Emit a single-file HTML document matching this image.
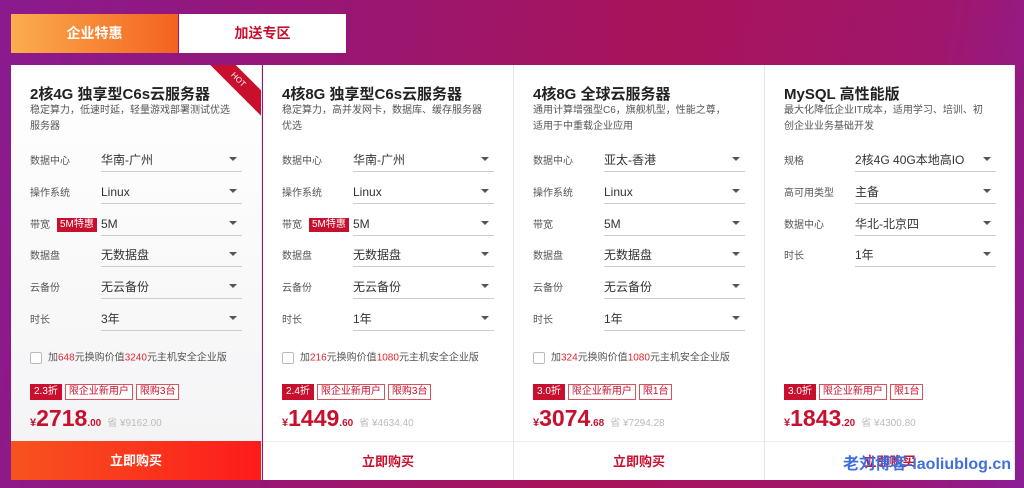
<!DOCTYPE html>
<html><head><meta charset="utf-8"><style>
*{margin:0;padding:0;box-sizing:border-box}
body{width:1024px;height:488px;overflow:hidden;font-family:"Liberation Sans","Noto Sans CJK SC",sans-serif;background:linear-gradient(100deg,#8a1a8f 0%,#9a1670 35%,#a8145a 60%,#a0166c 85%,#8b1e95 100%);position:relative}
.tab{position:absolute;top:14px;height:39px;width:167px;text-align:center;line-height:39px;font-size:14px;font-weight:bold}
.t1{left:11px;background:linear-gradient(90deg,#fbad4e,#f4621f);color:#fff}
.t2{left:179px;background:#fff;color:#c8102e}
.card{position:absolute;top:65px;height:415px;width:251px;background:#fff;border-right:1px solid #e6e6e6;overflow:hidden}
.card.f{background:linear-gradient(180deg,#fff 0%,#f3f3f5 100%)}
.ttl{position:absolute;left:19px;top:21px;font-size:15px;line-height:18px;font-weight:bold;color:#222}
.desc{position:absolute;left:19px;top:38px;width:200px;font-size:10px;line-height:16px;color:#555}
.row{position:absolute;left:19px;width:212px;height:22px;font-size:10px;color:#555}
.row .l{position:absolute;left:0;top:5px;line-height:14px}
.row .s{position:absolute;left:71px;top:0;width:141px;height:22px;border-bottom:1px solid #ccc;font-size:12px;color:#333;line-height:14px;padding-top:3px}
.row .s:after{content:"";position:absolute;right:5px;top:7px;border:4px solid transparent;border-top:4px solid #555}
.badge{position:absolute;left:27px;top:4px;background:#c8102e;color:#fff;font-size:10px;padding:0 3px;line-height:14px}
.chk{position:absolute;left:19px;top:287px;font-size:10px;color:#555;line-height:12px}
.chk i{display:inline-block;width:12px;height:12px;border:1px solid #bbb;border-radius:2px;vertical-align:middle;margin-right:6px;background:#fff}
.r{color:#e0252f}
.tags{position:absolute;left:19px;top:319px;font-size:10px}
.tags span{display:inline-block;line-height:14px;padding:0 3px;border:1px solid #d8525b;color:#c8102e;margin-right:3px;background:#fff}
.tags span.d{background:#c8102e;color:#fff;border-color:#c8102e}
.price{position:absolute;left:19px;top:340px;color:#c8102e;font-weight:bold;white-space:nowrap}
.price .y{font-size:11px}.price .b{font-size:23px}.price .c{font-size:10px}
.price .o{font-size:10px;color:#bbb;font-weight:normal;margin-left:6px}
.btn{position:absolute;left:0;bottom:0;width:100%;height:39px;line-height:39px;text-align:center;font-size:13px;font-weight:bold;color:#c8102e;background:#fff;border-top:1px solid #eee}
.f .btn{background:linear-gradient(90deg,#f7531e,#fd1b1b);color:#fff;border:none}
.hot{position:absolute;right:-22px;top:6px;width:90px;height:18px;background:#c8102e;transform:rotate(45deg);color:#fff;font-size:8px;text-align:center;line-height:18px}
.wm{position:absolute;left:843px;top:450px;font-size:16px;font-weight:bold;color:#3f6fdd}
</style></head><body>
<div class="tab t1">企业特惠</div><div class="tab t2">加送专区</div>

<div class="card f" style="left:11px">
<div class="hot">HOT</div>
<div class="ttl">2核4G 独享型C6s云服务器</div>
<div class="desc">稳定算力，低速时延，轻量游戏部署测试优选服务器</div>
<div class="row" style="top:85px"><span class="l">数据中心</span><div class="s">华南-广州</div></div>
<div class="row" style="top:117px"><span class="l">操作系统</span><div class="s">Linux</div></div>
<div class="row" style="top:149px"><span class="l">带宽</span><span class="badge">5M特惠</span><div class="s">5M</div></div>
<div class="row" style="top:180px"><span class="l">数据盘</span><div class="s">无数据盘</div></div>
<div class="row" style="top:212px"><span class="l">云备份</span><div class="s">无云备份</div></div>
<div class="row" style="top:244px"><span class="l">时长</span><div class="s">3年</div></div>
<div class="chk"><i></i>加<span class="r">648</span>元换购价值<span class="r">3240</span>元主机安全企业版</div>
<div class="tags"><span class="d">2.3折</span><span>限企业新用户</span><span>限购3台</span></div>
<div class="price"><span class="y">¥</span><span class="b">2718</span><span class="c">.00</span><span class="o">省 ¥9162.00</span></div>
<div class="btn">立即购买</div></div>

<div class="card" style="left:263px">
<div class="ttl">4核8G 独享型C6s云服务器</div>
<div class="desc">稳定算力，高并发网卡，数据库、缓存服务器优选</div>
<div class="row" style="top:85px"><span class="l">数据中心</span><div class="s">华南-广州</div></div>
<div class="row" style="top:117px"><span class="l">操作系统</span><div class="s">Linux</div></div>
<div class="row" style="top:149px"><span class="l">带宽</span><span class="badge">5M特惠</span><div class="s">5M</div></div>
<div class="row" style="top:180px"><span class="l">数据盘</span><div class="s">无数据盘</div></div>
<div class="row" style="top:212px"><span class="l">云备份</span><div class="s">无云备份</div></div>
<div class="row" style="top:244px"><span class="l">时长</span><div class="s">1年</div></div>
<div class="chk"><i></i>加<span class="r">216</span>元换购价值<span class="r">1080</span>元主机安全企业版</div>
<div class="tags"><span class="d">2.4折</span><span>限企业新用户</span><span>限购3台</span></div>
<div class="price"><span class="y">¥</span><span class="b">1449</span><span class="c">.60</span><span class="o">省 ¥4634.40</span></div>
<div class="btn">立即购买</div></div>

<div class="card" style="left:514px">
<div class="ttl">4核8G 全球云服务器</div>
<div class="desc">通用计算增强型C6，旗舰机型，性能之尊，适用于中重载企业应用</div>
<div class="row" style="top:85px"><span class="l">数据中心</span><div class="s">亚太-香港</div></div>
<div class="row" style="top:117px"><span class="l">操作系统</span><div class="s">Linux</div></div>
<div class="row" style="top:149px"><span class="l">带宽</span><div class="s">5M</div></div>
<div class="row" style="top:180px"><span class="l">数据盘</span><div class="s">无数据盘</div></div>
<div class="row" style="top:212px"><span class="l">云备份</span><div class="s">无云备份</div></div>
<div class="row" style="top:244px"><span class="l">时长</span><div class="s">1年</div></div>
<div class="chk"><i></i>加<span class="r">324</span>元换购价值<span class="r">1080</span>元主机安全企业版</div>
<div class="tags"><span class="d">3.0折</span><span>限企业新用户</span><span>限1台</span></div>
<div class="price"><span class="y">¥</span><span class="b">3074</span><span class="c">.68</span><span class="o">省 ¥7294.28</span></div>
<div class="btn">立即购买</div></div>

<div class="card" style="left:765px;width:250px">
<div class="ttl">MySQL 高性能版</div>
<div class="desc">最大化降低企业IT成本，适用学习、培训、初创企业业务基础开发</div>
<div class="row" style="top:85px"><span class="l">规格</span><div class="s">2核4G 40G本地高IO</div></div>
<div class="row" style="top:117px"><span class="l">高可用类型</span><div class="s">主备</div></div>
<div class="row" style="top:149px"><span class="l">数据中心</span><div class="s">华北-北京四</div></div>
<div class="row" style="top:180px"><span class="l">时长</span><div class="s">1年</div></div>
<div class="tags"><span class="d">3.0折</span><span>限企业新用户</span><span>限1台</span></div>
<div class="price"><span class="y">¥</span><span class="b">1843</span><span class="c">.20</span><span class="o">省 ¥4300.80</span></div>
<div class="btn">立即购买</div></div>
<div class="wm">老刘博客-laoliublog.cn</div>
</body></html>
